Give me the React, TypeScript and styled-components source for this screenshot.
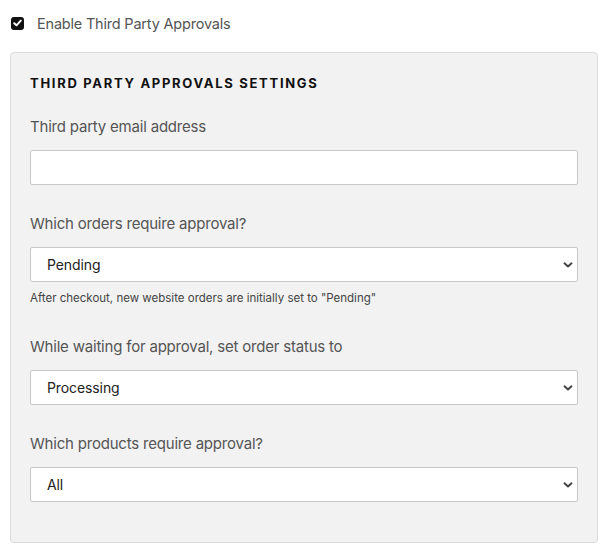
import React from "react";
import styled, { createGlobalStyle } from "styled-components";

const Global = createGlobalStyle`
  html, body { margin: 0; padding: 0; background: #fff; }
  body { font-family: Inter, "Noto Sans", sans-serif; -webkit-font-smoothing: antialiased; }
  * { box-sizing: border-box; }
`;

const Page = styled.div`
  padding: 11px 17px 14px 10px;
  display: flex;
  flex-direction: column;
  gap: 17px;
`;

const CheckRow = styled.label`
  display: flex;
  align-items: center;
  gap: 13px;
  padding-left: 1px;
  height: 24px;
  font-size: 14.5px;
  letter-spacing: -0.2px;
  color: #555;
`;

const CheckBox = styled.span`
  width: 13px;
  height: 13px;
  border-radius: 3px;
  background: #111;
  display: flex;
  align-items: center;
  justify-content: center;
`;

const Panel = styled.section`
  background: #f2f2f2;
  border: 1px solid #dcdcdc;
  border-radius: 4px;
  padding: 20px 19px 40px 19px;
  display: flex;
  flex-direction: column;
`;

const Heading = styled.h2`
  margin: 0 0 23px;
  font-size: 13px;
  line-height: 20px;
  font-weight: 700;
  letter-spacing: 1.7px;
  color: #111;
  text-transform: uppercase;
`;

const Field = styled.div<{ $last?: boolean; $extra?: number }>`
  display: flex;
  flex-direction: column;
  margin-bottom: ${(p) => (p.$last ? 0 : 28 + (p.$extra ?? 0))}px;
`;

const Label = styled.label`
  font-size: 15px;
  line-height: 22px;
  letter-spacing: -0.2px;
  color: #555;
  margin-bottom: 12px;
`;

const TextInput = styled.input`
  height: 35px;
  border: 1px solid #c8c8c8;
  border-radius: 2px;
  background: #fff;
  padding: 0 16px;
  font: inherit;
  font-size: 14px;
`;

const SelectWrap = styled.div`
  position: relative;
`;

const Select = styled.select`
  width: 100%;
  height: 35px;
  border: 1px solid #c8c8c8;
  border-radius: 2px;
  background: #fff;
  padding: 0 16px;
  font-family: inherit;
  font-size: 14px;
  letter-spacing: -0.1px;
  color: #222;
  appearance: none;
  -webkit-appearance: none;
`;

const Chevron = styled.svg`
  position: absolute;
  right: 5px;
  top: 50%;
  transform: translateY(-50%);
  pointer-events: none;
`;

const Help = styled.p`
  margin: 8px 0 0;
  font-size: 11.5px;
  line-height: 16px;
  color: #444;
`;

const ChevronIcon = () => (
  <Chevron width="10" height="7" viewBox="0 0 10 7">
    <path d="M1.5 1.8 L5 5 L8.5 1.8" fill="none" stroke="#444" strokeWidth="2" strokeLinecap="round" strokeLinejoin="round" />
  </Chevron>
);

const SelectField = ({ label, value, options, help, last }: { label: string; value: string; options: string[]; help?: string; last?: boolean }) => (
  <Field $last={last} $extra={help ? 2 : 0}>
    <Label>{label}</Label>
    <SelectWrap>
      <Select defaultValue={value}>
        {options.map((o) => (
          <option key={o}>{o}</option>
        ))}
      </Select>
      <ChevronIcon />
    </SelectWrap>
    {help && <Help>{help}</Help>}
  </Field>
);

export default function App() {
  return (
    <>
      <Global />
      <Page>
        <CheckRow>
          <CheckBox>
            <svg width="9" height="8" viewBox="0 0 9 8">
              <path d="M1.2 4.2 L3.5 6.3 L7.8 1.6" fill="none" stroke="#fff" strokeWidth="1.9" strokeLinecap="round" strokeLinejoin="round" />
            </svg>
          </CheckBox>
          Enable Third Party Approvals
        </CheckRow>
        <Panel>
          <Heading>Third Party Approvals Settings</Heading>
          <Field>
            <Label>Third party email address</Label>
            <TextInput type="email" />
          </Field>
          <SelectField
            label="Which orders require approval?"
            value="Pending"
            options={["Pending", "Processing", "All"]}
            help={'After checkout, new website orders are initially set to "Pending"'}
          />
          <SelectField
            label="While waiting for approval, set order status to"
            value="Processing"
            options={["Pending", "Processing", "On hold"]}
          />
          <SelectField
            label="Which products require approval?"
            value="All"
            options={["All", "Selected"]}
            last
          />
        </Panel>
      </Page>
    </>
  );
}
